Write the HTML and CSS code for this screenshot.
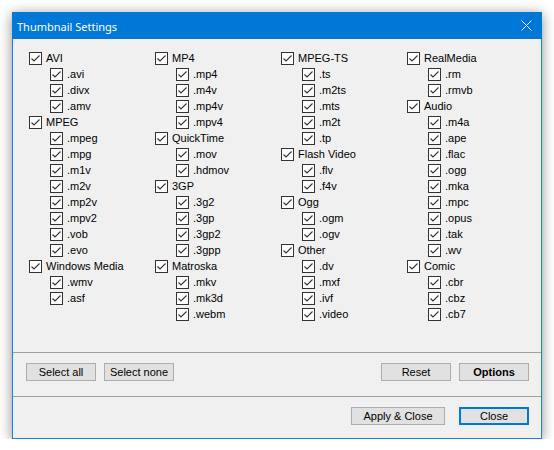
FILE: index.html
```html
<!DOCTYPE html>
<html>
<head>
<meta charset="utf-8">
<link rel="stylesheet" href="styles.css">
</head>
<body>
<svg class="defs" width="0" height="0" aria-hidden="true">
  <symbol id="ck" viewBox="0 0 13 13"><path d="M2.5 6.5 L5 9 L10.5 3.5" fill="none" stroke="#333" stroke-width="1.1"/></symbol>
</svg>
<div class="window">
  <div class="titlebar">
    <span class="title">Thumbnail Settings</span>
    <svg class="close-x" width="11" height="11" viewBox="0 0 11 11"><path d="M0.5 0.5 L10.5 10.5 M10.5 0.5 L0.5 10.5" stroke="#fff" stroke-width="1"/></svg>
  </div>
  <div class="main">
    <div class="col">
      <div class="row"><span class="cb"><svg><use href="#ck"/></svg></span>AVI</div>
      <div class="row sub"><span class="cb"><svg><use href="#ck"/></svg></span>.avi</div>
      <div class="row sub"><span class="cb"><svg><use href="#ck"/></svg></span>.divx</div>
      <div class="row sub"><span class="cb"><svg><use href="#ck"/></svg></span>.amv</div>
      <div class="row"><span class="cb"><svg><use href="#ck"/></svg></span>MPEG</div>
      <div class="row sub"><span class="cb"><svg><use href="#ck"/></svg></span>.mpeg</div>
      <div class="row sub"><span class="cb"><svg><use href="#ck"/></svg></span>.mpg</div>
      <div class="row sub"><span class="cb"><svg><use href="#ck"/></svg></span>.m1v</div>
      <div class="row sub"><span class="cb"><svg><use href="#ck"/></svg></span>.m2v</div>
      <div class="row sub"><span class="cb"><svg><use href="#ck"/></svg></span>.mp2v</div>
      <div class="row sub"><span class="cb"><svg><use href="#ck"/></svg></span>.mpv2</div>
      <div class="row sub"><span class="cb"><svg><use href="#ck"/></svg></span>.vob</div>
      <div class="row sub"><span class="cb"><svg><use href="#ck"/></svg></span>.evo</div>
      <div class="row"><span class="cb"><svg><use href="#ck"/></svg></span>Windows Media</div>
      <div class="row sub"><span class="cb"><svg><use href="#ck"/></svg></span>.wmv</div>
      <div class="row sub"><span class="cb"><svg><use href="#ck"/></svg></span>.asf</div>
    </div>
    <div class="col">
      <div class="row"><span class="cb"><svg><use href="#ck"/></svg></span>MP4</div>
      <div class="row sub"><span class="cb"><svg><use href="#ck"/></svg></span>.mp4</div>
      <div class="row sub"><span class="cb"><svg><use href="#ck"/></svg></span>.m4v</div>
      <div class="row sub"><span class="cb"><svg><use href="#ck"/></svg></span>.mp4v</div>
      <div class="row sub"><span class="cb"><svg><use href="#ck"/></svg></span>.mpv4</div>
      <div class="row"><span class="cb"><svg><use href="#ck"/></svg></span>QuickTime</div>
      <div class="row sub"><span class="cb"><svg><use href="#ck"/></svg></span>.mov</div>
      <div class="row sub"><span class="cb"><svg><use href="#ck"/></svg></span>.hdmov</div>
      <div class="row"><span class="cb"><svg><use href="#ck"/></svg></span>3GP</div>
      <div class="row sub"><span class="cb"><svg><use href="#ck"/></svg></span>.3g2</div>
      <div class="row sub"><span class="cb"><svg><use href="#ck"/></svg></span>.3gp</div>
      <div class="row sub"><span class="cb"><svg><use href="#ck"/></svg></span>.3gp2</div>
      <div class="row sub"><span class="cb"><svg><use href="#ck"/></svg></span>.3gpp</div>
      <div class="row"><span class="cb"><svg><use href="#ck"/></svg></span>Matroska</div>
      <div class="row sub"><span class="cb"><svg><use href="#ck"/></svg></span>.mkv</div>
      <div class="row sub"><span class="cb"><svg><use href="#ck"/></svg></span>.mk3d</div>
      <div class="row sub"><span class="cb"><svg><use href="#ck"/></svg></span>.webm</div>
    </div>
    <div class="col">
      <div class="row"><span class="cb"><svg><use href="#ck"/></svg></span>MPEG-TS</div>
      <div class="row sub"><span class="cb"><svg><use href="#ck"/></svg></span>.ts</div>
      <div class="row sub"><span class="cb"><svg><use href="#ck"/></svg></span>.m2ts</div>
      <div class="row sub"><span class="cb"><svg><use href="#ck"/></svg></span>.mts</div>
      <div class="row sub"><span class="cb"><svg><use href="#ck"/></svg></span>.m2t</div>
      <div class="row sub"><span class="cb"><svg><use href="#ck"/></svg></span>.tp</div>
      <div class="row"><span class="cb"><svg><use href="#ck"/></svg></span>Flash Video</div>
      <div class="row sub"><span class="cb"><svg><use href="#ck"/></svg></span>.flv</div>
      <div class="row sub"><span class="cb"><svg><use href="#ck"/></svg></span>.f4v</div>
      <div class="row"><span class="cb"><svg><use href="#ck"/></svg></span>Ogg</div>
      <div class="row sub"><span class="cb"><svg><use href="#ck"/></svg></span>.ogm</div>
      <div class="row sub"><span class="cb"><svg><use href="#ck"/></svg></span>.ogv</div>
      <div class="row"><span class="cb"><svg><use href="#ck"/></svg></span>Other</div>
      <div class="row sub"><span class="cb"><svg><use href="#ck"/></svg></span>.dv</div>
      <div class="row sub"><span class="cb"><svg><use href="#ck"/></svg></span>.mxf</div>
      <div class="row sub"><span class="cb"><svg><use href="#ck"/></svg></span>.ivf</div>
      <div class="row sub"><span class="cb"><svg><use href="#ck"/></svg></span>.video</div>
    </div>
    <div class="col">
      <div class="row"><span class="cb"><svg><use href="#ck"/></svg></span>RealMedia</div>
      <div class="row sub"><span class="cb"><svg><use href="#ck"/></svg></span>.rm</div>
      <div class="row sub"><span class="cb"><svg><use href="#ck"/></svg></span>.rmvb</div>
      <div class="row"><span class="cb"><svg><use href="#ck"/></svg></span>Audio</div>
      <div class="row sub"><span class="cb"><svg><use href="#ck"/></svg></span>.m4a</div>
      <div class="row sub"><span class="cb"><svg><use href="#ck"/></svg></span>.ape</div>
      <div class="row sub"><span class="cb"><svg><use href="#ck"/></svg></span>.flac</div>
      <div class="row sub"><span class="cb"><svg><use href="#ck"/></svg></span>.ogg</div>
      <div class="row sub"><span class="cb"><svg><use href="#ck"/></svg></span>.mka</div>
      <div class="row sub"><span class="cb"><svg><use href="#ck"/></svg></span>.mpc</div>
      <div class="row sub"><span class="cb"><svg><use href="#ck"/></svg></span>.opus</div>
      <div class="row sub"><span class="cb"><svg><use href="#ck"/></svg></span>.tak</div>
      <div class="row sub"><span class="cb"><svg><use href="#ck"/></svg></span>.wv</div>
      <div class="row"><span class="cb"><svg><use href="#ck"/></svg></span>Comic</div>
      <div class="row sub"><span class="cb"><svg><use href="#ck"/></svg></span>.cbr</div>
      <div class="row sub"><span class="cb"><svg><use href="#ck"/></svg></span>.cbz</div>
      <div class="row sub"><span class="cb"><svg><use href="#ck"/></svg></span>.cb7</div>
    </div>
  </div>
  <div class="bar sel">
    <button class="btn">Select all</button>
    <button class="btn">Select none</button>
    <span class="spacer"></span>
    <button class="btn">Reset</button>
    <button class="btn bold">Options</button>
  </div>
  <div class="bar foot">
    <span class="spacer"></span>
    <button class="btn wide">Apply &amp; Close</button>
    <button class="btn default">Close</button>
  </div>
</div>
</body>
</html>
```
FILE: styles.css
```css
* { box-sizing: border-box; }
html, body { margin: 0; padding: 0; background: #fff; }
body { font-family: "Liberation Sans", Arial, sans-serif; font-size: 11px; color: #000; }
.defs { position: absolute; width: 0; height: 0; }
.window {
  margin: 12px 0 0 12px;
  width: 530px;
  height: 427px;
  background: #f0f0f0;
  border: 1px solid #1883d7;
  border-top: 0;
  box-shadow: 0 2px 12px rgba(0,0,0,0.45);
  display: flex;
  flex-direction: column;
}
.titlebar {
  height: 27px;
  margin: 0 -1px;
  background: #0078d7;
  color: #fff;
  display: flex;
  align-items: center;
  padding: 0 10px 0 5px;
  flex: none;
}
.title { font-family: "Noto Sans", "Open Sans", sans-serif; font-size: 11px; flex: 1; padding-top: 1px; }
.close-x { display: block; }
.main {
  flex: 1;
  display: grid;
  grid-template-columns: 126px 126px 126px 1fr;
  padding: 11px 0 0 16px;
  align-items: start;
}
.row {
  height: 16px;
  display: flex;
  align-items: center;
  white-space: nowrap;
}
.row.sub { padding-left: 21px; }
.cb {
  width: 13px;
  height: 13px;
  border: 1px solid #333;
  background: #fff;
  margin-right: 4px;
  flex: none;
  position: relative;
}
.cb svg { position: absolute; left: -1px; top: -1px; width: 13px; height: 13px; }
.bar {
  display: flex;
  align-items: flex-start;
  gap: 8px;
  border-top: 1px solid #a0a0a0;
  flex: none;
}
.sel { height: 44px; padding: 10px 12px 0 13px; }
.foot { height: 42px; padding: 10px 12px 0 13px; }
.spacer { flex: 1; }
.btn {
  width: 70px;
  height: 18px;
  padding: 0;
  margin: 0;
  border: 1px solid #adadad;
  background: #e1e1e1;
  font-family: "Liberation Sans", Arial, sans-serif;
  font-size: 11px;
  color: #000;
  line-height: 16px;
}
.btn.wide { width: 94px; margin-right: 6px; }
.btn.bold { font-weight: bold; }
.btn.default { border: 2px solid #0078d7; line-height: 14px; }
```
